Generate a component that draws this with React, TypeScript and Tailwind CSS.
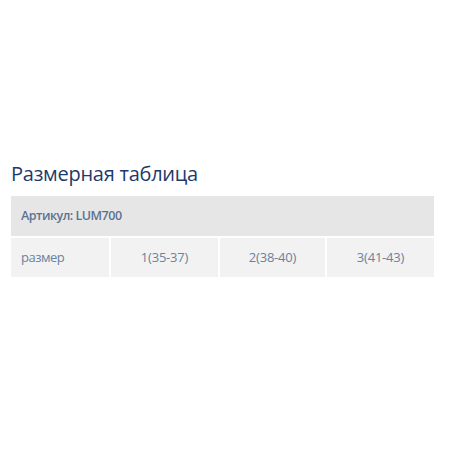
export default function App() {
  const font = { fontFamily: '"Open Sans", "Noto Sans", sans-serif' };
  return (
    <div className="w-[450px] h-[450px] bg-white" style={font}>
      <div className="pt-[160px] pl-[11px]">
        <h2 className="text-[20px] leading-[28px] font-normal text-[#1d3a6b] tracking-[-0.25px]">Размерная таблица</h2>
        <div className="mt-[8px] w-[423px] flex flex-col gap-[2px]">
          <div className="h-[40px] bg-[#e6e6e6] flex items-center pl-[10px] text-[12.5px] font-semibold text-[#5b7391] tracking-[-0.5px]">
            Артикул: LUM700
          </div>
          <div className="grid grid-cols-[98px_107px_105px_107px] gap-[2px] h-[39px] text-[13px] text-[#6a829e] tracking-[-0.2px]">
            <div className="bg-[#f2f2f2] flex items-center pl-[10px] tracking-[-0.5px]">размер</div>
            <div className="bg-[#f2f2f2] flex items-center justify-center">1(35-37)</div>
            <div className="bg-[#f2f2f2] flex items-center justify-center">2(38-40)</div>
            <div className="bg-[#f2f2f2] flex items-center justify-center">3(41-43)</div>
          </div>
        </div>
      </div>
    </div>
  );
}
